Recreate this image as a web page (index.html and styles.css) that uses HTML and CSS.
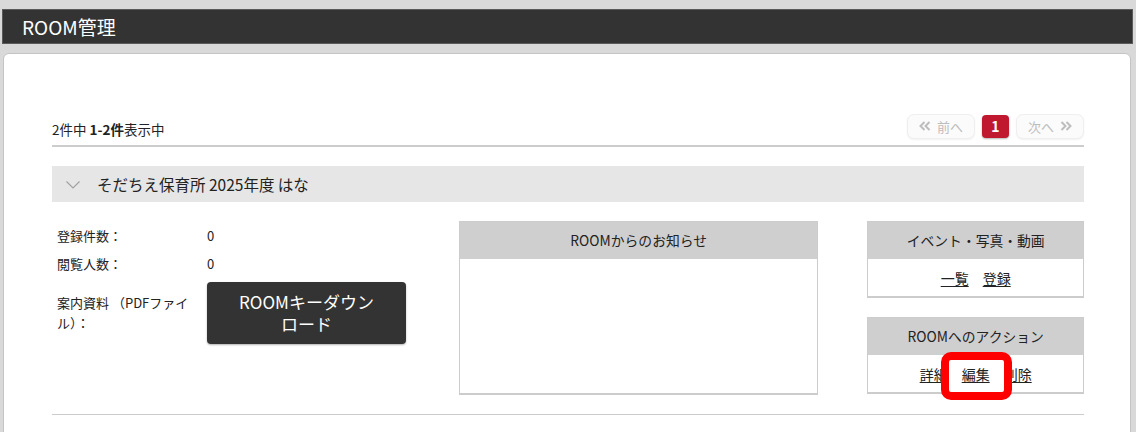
FILE: index.html
```html
<!DOCTYPE html>
<html lang="ja">
<head>
<meta charset="utf-8">
<title>ROOM管理</title>
<link rel="stylesheet" href="styles.css">
</head>
<body>
<header class="page-head">ROOM管理</header>
<main class="card">
  <div class="list-bar">
    <div class="summary">2件中 <b>1-2件</b>表示中</div>
    <nav class="pager">
      <span class="pg-btn disabled"><svg class="dq" width="12" height="10" viewBox="0 0 12 10"><path d="M5.5 1 L1.5 5 L5.5 9 M10.5 1 L6.5 5 L10.5 9" fill="none" stroke="#bdbdbd" stroke-width="2"/></svg>前へ</span>
      <span class="pg-cur">1</span>
      <span class="pg-btn disabled">次へ<svg class="dq" width="12" height="10" viewBox="0 0 12 10"><path d="M1.5 1 L5.5 5 L1.5 9 M6.5 1 L10.5 5 L6.5 9" fill="none" stroke="#bdbdbd" stroke-width="2"/></svg></span>
    </nav>
  </div>

  <div class="acc-head">
    <svg class="chev" width="14" height="8" viewBox="0 0 14 8"><path d="M0.5 0.5 L7 7 L13.5 0.5" fill="none" stroke="#a0a0a0" stroke-width="1.1"/></svg>
    <span>そだちえ保育所 2025年度 はな</span>
  </div>

  <section class="room-body">
    <div class="info">
      <div class="lbl">登録件数：</div><div class="val">0</div>
      <div class="lbl">閲覧人数：</div><div class="val">0</div>
      <div class="lbl">案内資料 （PDFファイル）：</div>
      <div class="val"><a class="dl-btn">ROOMキーダウンロード</a></div>
    </div>

    <div class="box notice">
      <div class="box-head">ROOMからのお知らせ</div>
      <div class="box-body"></div>
    </div>

    <div class="side">
      <div class="box">
        <div class="box-head">イベント・写真・動画</div>
        <div class="box-body links"><a>一覧</a><a>登録</a></div>
      </div>
      <div class="box action">
        <div class="box-head">ROOMへのアクション</div>
        <div class="box-body links"><a>詳細</a><a class="hl-link">編集</a><a>削除</a></div>
        <div class="highlight"></div>
      </div>
    </div>
  </section>
  <hr class="sep">
</main>
</body>
</html>
```
FILE: styles.css
```css
* { box-sizing: border-box; }
html, body { margin: 0; }
body {
  background: #d9d9d9;
  padding: 9px 3px 0 2px;
  font-family: "Noto Sans CJK JP", "Noto Sans", sans-serif;
  color: #222;
  overflow: hidden;
}
.page-head {
  height: 35px;
  background: #333;
  border: 1px solid #5a5a5a;
  color: #fff;
  font-size: 19px;
  line-height: 33px;
  padding-left: 19px;
}
.card {
  margin: 9px 2px 0 1px;
  background: #fff;
  border: 1px solid #c4c4c4;
  border-radius: 6px 6px 0 0;
  padding: 59px 46px 40px 48px;
  min-height: 420px;
}
.list-bar {
  display: flex;
  justify-content: space-between;
  align-items: center;
  border-bottom: 2px solid #cccccc;
  padding-bottom: 6px;
  height: 34px;
}
.summary { font-size: 13.5px; line-height: 20px; padding-top: 6px; }
.summary b { font-weight: 700; }
.pager { display: flex; align-items: center; gap: 6px; }
.pg-btn {
  height: 25px;
  border: 1px solid #efefef;
  background: #fbfbfb;
  border-radius: 7px;
  color: #bdbdbd;
  font-size: 13px;
  line-height: 23px;
  box-shadow: 0 1px 2px rgba(0,0,0,0.06);
  width: 68px;
  display: flex;
  align-items: center;
  justify-content: center;
  gap: 6px;
}
.dq { display: block; }
.pg-cur {
  width: 27px;
  height: 23px;
  background: #c0182f;
  color: #fff;
  border-radius: 4px;
  font-size: 14px;
  font-weight: 700;
  line-height: 23px;
  text-align: center;
  box-shadow: 0 1px 2px rgba(0,0,0,0.3);
  margin: 0 1px;
}
.acc-head {
  margin-top: 19px;
  height: 36px;
  background: #e6e6e6;
  display: flex;
  align-items: center;
  padding-left: 14px;
  font-size: 15.5px;
}
.chev { margin-right: 17px; margin-top: 1px; }
.room-body {
  display: flex;
  margin-top: 19px;
  align-items: flex-start;
}
.info {
  flex: 0 0 407px;
  display: grid;
  grid-template-columns: 145px auto;
  column-gap: 5px;
  row-gap: 8px;
  align-items: center;
  padding: 5px 0 0 5px;
  font-size: 13px;
  line-height: 20px;
  justify-content: start;
}
.dl-btn {
  display: block;
  width: 199px;
  height: 62px;
  background: #333;
  color: #fff;
  border-radius: 4px;
  font-size: 17px;
  line-height: 22px;
  text-align: center;
  padding: 9px 24px 0;
  box-shadow: 0 1px 2px rgba(0,0,0,0.3);
}
.box {
  border: 1px solid #cccccc;
  border-bottom-width: 2px;
  background: #fff;
}
.box-head {
  height: 37px;
  background: #cfcfcf;
  font-size: 13.8px;
  line-height: 37px;
  text-align: center;
}
.notice { width: 360px; height: 174px; }
.side {
  margin-left: 49px;
  width: 217px;
  display: flex;
  flex-direction: column;
  gap: 19px;
}
.links {
  height: 37px;
  display: flex;
  justify-content: center;
  align-items: center;
  gap: 14px;
  font-size: 14px;
}
.links a { color: #222; text-decoration: underline; text-underline-offset: 2px; }
.action { position: relative; }
.hl-link { position: relative; z-index: 2; }
.highlight {
  position: absolute;
  left: 73px;
  top: 34px;
  width: 71px;
  height: 48px;
  border: 8px solid #ff0000;
  border-radius: 10px;
  background: #fff;
  z-index: 1;
}
.sep {
  margin: 19px 0 0;
  border: 0;
  border-top: 1px solid #cccccc;
}
```
